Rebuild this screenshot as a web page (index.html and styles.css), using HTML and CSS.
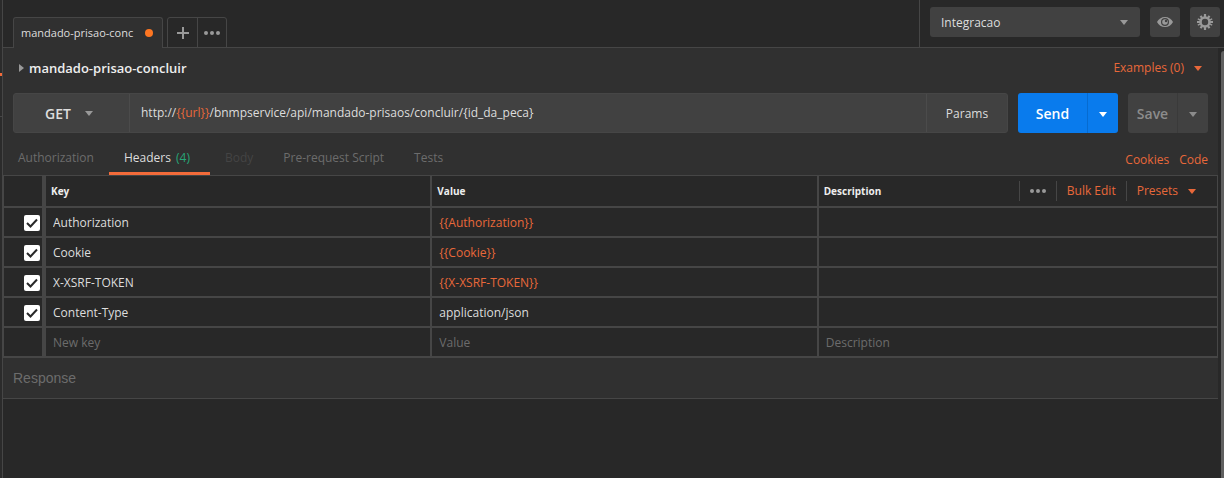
FILE: index.html
```html
<!DOCTYPE html>
<html lang="en">
<head>
  <meta charset="UTF-8">
  <meta name="viewport" content="width=device-width, initial-scale=1.0">
  <title>mandado-prisao-concluir</title>
  <link rel="stylesheet" href="styles.css">
</head>
<body>
  <!-- Collapsed sidebar -->
  <aside class="sidebar">
    <div class="sidebar-tab"></div>
    <div class="sidebar-item"></div>
  </aside>

  <div class="workspace">
    <!-- Top bar -->
    <header class="topbar">
      <nav class="tabs">
        <a href="#" class="tab">mandado-prisao-conc<span class="unsaved"></span></a>
        <div class="tab-actions">
          <button type="button" aria-label="New tab">
            <svg width="12" height="12" viewBox="0 0 12 12"><path d="M6 0v12M0 6h12" stroke="#999" stroke-width="2"/></svg>
          </button>
          <button type="button" aria-label="Tab options">
            <svg width="16" height="4" viewBox="0 0 16 4" fill="#999"><circle cx="2" cy="2" r="2"/><circle cx="8" cy="2" r="2"/><circle cx="14" cy="2" r="2"/></svg>
          </button>
        </div>
      </nav>
      <div class="environment">
        <div class="select-box env-select">
          <select aria-label="Environment">
            <option>Integracao</option>
          </select>
          <svg class="caret" width="8" height="5" viewBox="0 0 8 5"><path d="M0 0h8L4 5z"/></svg>
        </div>
        <button type="button" class="icon-button" aria-label="Quick look">
          <svg width="16" height="10" viewBox="0 0 16 10">
            <path d="M0 5C1.500 2 4.500 0 8 0s6.500 2 8 5c-1.500 3-4.500 5-8 5S1.500 8 0 5z" fill="#999"/>
            <circle cx="8" cy="5" r="4" fill="#414141"/>
            <circle cx="8" cy="5" r="2.800" fill="#999"/>
            <circle cx="9" cy="4" r="1.200" fill="#414141"/>
          </svg>
        </button>
        <button type="button" class="icon-button" aria-label="Settings">
          <svg width="16" height="16" viewBox="-8 -8 16 16">
            <g stroke="#999" stroke-width="2.200">
              <path d="M0-8V-5M0 8V5M-8 0H-5M8 0H5"/>
              <path d="M-4.500-6.200L-3-4.200M4.500-6.200L3-4.200M-4.500 6.200L-3 4.200M4.500 6.200L3 4.200"/>
              <path d="M-7.200-3.200L-5-2.200M7.200-3.200L5-2.200M-7.200 3.200L-5 2.200M7.200 3.200L5 2.200" stroke-width="1.400"/>
            </g>
            <circle r="4.500" fill="none" stroke="#999" stroke-width="2.600"/>
          </svg>
        </button>
      </div>
    </header>

    <div class="content">
      <main class="request">
        <!-- Request name -->
        <div class="request-head">
          <h1><svg width="5" height="8" viewBox="0 0 5 8"><path d="M0 0v8l5-4z" fill="#999"/></svg>mandado-prisao-concluir</h1>
          <a href="#" class="link">Examples (0)<svg class="caret" width="8" height="5" viewBox="0 0 8 5"><path d="M0 0h8L4 5z"/></svg></a>
        </div>

        <!-- Method and url -->
        <form class="url-row">
          <div class="url-bar">
            <div class="select-box method">
              <select aria-label="Method">
                <option>GET</option>
              </select>
              <svg class="caret" width="8" height="5" viewBox="0 0 8 5"><path d="M0 0h8L4 5z"/></svg>
            </div>
            <div class="url" contenteditable="true" role="textbox" aria-label="Request URL" spellcheck="false">http://<span class="variable">{{url}}</span>/bnmpservice/api/mandado-prisaos/concluir/{id_da_peca}</div>
            <button type="button" class="params">Params</button>
          </div>
          <div class="split send">
            <button type="button">Send</button>
            <button type="button" class="split-arrow" aria-label="Send options"><svg class="caret" width="8" height="5" viewBox="0 0 8 5"><path d="M0 0h8L4 5z"/></svg></button>
          </div>
          <div class="split save">
            <button type="button">Save</button>
            <button type="button" class="split-arrow" aria-label="Save options"><svg class="caret" width="8" height="5" viewBox="0 0 8 5"><path d="M0 0h8L4 5z"/></svg></button>
          </div>
        </form>

        <!-- Request sections -->
        <div class="sections">
          <nav class="section-tabs">
            <a href="#">Authorization</a>
            <a href="#" class="active">Headers <span class="count">(4)</span></a>
            <a href="#" class="disabled">Body</a>
            <a href="#">Pre-request Script</a>
            <a href="#">Tests</a>
          </nav>
          <div class="section-links">
            <a href="#" class="link">Cookies</a>
            <a href="#" class="link">Code</a>
          </div>
        </div>

        <!-- Headers -->
        <table class="headers">
          <colgroup>
            <col class="col-check">
            <col class="col-key">
            <col class="col-value">
            <col>
          </colgroup>
          <thead>
            <tr>
              <th></th>
              <th>Key</th>
              <th>Value</th>
              <th>
                <div class="last-head">
                  Description
                  <div class="table-actions">
                    <button type="button" aria-label="Columns"><svg width="16" height="4" viewBox="0 0 16 4" fill="#999"><circle cx="2" cy="2" r="2"/><circle cx="8" cy="2" r="2"/><circle cx="14" cy="2" r="2"/></svg></button>
                    <a href="#" class="link">Bulk Edit</a>
                    <a href="#" class="link">Presets<svg class="caret" width="8" height="5" viewBox="0 0 8 5"><path d="M0 0h8L4 5z"/></svg></a>
                  </div>
                </div>
              </th>
            </tr>
          </thead>
          <tbody>
            <tr>
              <td><label class="check"><input type="checkbox" aria-label="Authorization" checked><svg width="12" height="10" viewBox="0 0 12 10"><path d="M1 5l3.500 3.500L11 1.500"/></svg></label></td>
              <td><input type="text" aria-label="Key" value="Authorization"></td>
              <td><input type="text" aria-label="Value" class="variable" value="{{Authorization}}"></td>
              <td><input type="text" aria-label="Description"></td>
            </tr>
            <tr>
              <td><label class="check"><input type="checkbox" aria-label="Cookie" checked><svg width="12" height="10" viewBox="0 0 12 10"><path d="M1 5l3.500 3.500L11 1.500"/></svg></label></td>
              <td><input type="text" aria-label="Key" value="Cookie"></td>
              <td><input type="text" aria-label="Value" class="variable" value="{{Cookie}}"></td>
              <td><input type="text" aria-label="Description"></td>
            </tr>
            <tr>
              <td><label class="check"><input type="checkbox" aria-label="X-XSRF-TOKEN" checked><svg width="12" height="10" viewBox="0 0 12 10"><path d="M1 5l3.500 3.500L11 1.500"/></svg></label></td>
              <td><input type="text" aria-label="Key" value="X-XSRF-TOKEN"></td>
              <td><input type="text" aria-label="Value" class="variable" value="{{X-XSRF-TOKEN}}"></td>
              <td><input type="text" aria-label="Description"></td>
            </tr>
            <tr>
              <td><label class="check"><input type="checkbox" aria-label="Content-Type" checked><svg width="12" height="10" viewBox="0 0 12 10"><path d="M1 5l3.500 3.500L11 1.500"/></svg></label></td>
              <td><input type="text" aria-label="Key" value="Content-Type"></td>
              <td><input type="text" aria-label="Value" value="application/json"></td>
              <td><input type="text" aria-label="Description"></td>
            </tr>
            <tr>
              <td></td>
              <td><input type="text" aria-label="New key" placeholder="New key"></td>
              <td><input type="text" aria-label="Value" placeholder="Value"></td>
              <td><input type="text" aria-label="Description" placeholder="Description"></td>
            </tr>
          </tbody>
        </table>

        <!-- Response -->
        <h2 class="response">Response</h2>
      </main>
      <div class="scrollbar"><div class="thumb"></div></div>
    </div>
  </div>
</body>
</html>
```
FILE: styles.css
```css
/* Reset and Global Styles */
* {
  margin: 0;
  padding: 0;
  box-sizing: border-box;
}
body {
  display: flex;
  min-height: 100vh;
  font-family: "Open Sans", sans-serif;
  font-size: 12px;
  line-height: 20px;
  color: #ddd;
  background-color: #282828;
}
button, input, select {
  font: inherit;
  color: inherit;
  background: none;
  border: none;
  outline: none;
}
button {
  display: flex;
  align-items: center;
  justify-content: center;
  cursor: pointer;
}
a {
  color: inherit;
  text-decoration: none;
}
svg {
  display: block;
  flex: none;
}
.link, .variable {
  color: #e8683a;
}
.link {
  display: flex;
  align-items: center;
  gap: 10px;
}
.caret {
  fill: currentColor;
}

/* Sidebar */
.sidebar {
  width: 3px;
  background-color: #2b2b2b;
  border-right: 1px solid #464646;
}
.sidebar-tab {
  height: 76px;
  border-bottom: 3px solid #f36b3a;
}
.sidebar-item {
  height: 41px;
  border-bottom: 1px solid #464646;
}

.workspace {
  flex: 1;
  display: flex;
  flex-direction: column;
  min-width: 0;
}

/* Top bar */
.topbar {
  display: flex;
  justify-content: space-between;
  height: 48px;
  box-shadow: inset 0 -1px #464646;
}
.tabs {
  display: flex;
  align-items: flex-end;
  gap: 4px;
  padding-left: 10px;
}
.tab {
  display: flex;
  align-items: center;
  justify-content: space-between;
  width: 150px;
  height: 31px;
  padding: 0 9px 0 7px;
  font-size: 11px;
  background-color: #303030;
  border: 1px solid #464646;
  border-bottom: none;
  border-radius: 3px 3px 0 0;
}
.unsaved {
  width: 8px;
  height: 8px;
  border-radius: 50%;
  background-color: #fd7622;
}
.tab-actions {
  display: flex;
  height: 31px;
  border: 1px solid #464646;
  border-radius: 3px 3px 0 0;
}
.tab-actions button {
  width: 29px;
}
.tab-actions button + button {
  border-left: 1px solid #464646;
}
.environment {
  display: flex;
  gap: 10px;
  padding: 7px 4px 0 10px;
  border-left: 1px solid #464646;
}
.select-box {
  display: grid;
  align-items: center;
}
.select-box select,
.select-box .caret {
  grid-area: 1 / 1;
}
.select-box select {
  width: 100%;
  height: 100%;
  appearance: none;
}
.select-box .caret {
  justify-self: end;
  color: #999;
  pointer-events: none;
}
.env-select {
  width: 210px;
  height: 30px;
  background-color: #414141;
  border-radius: 3px;
}
.env-select select {
  padding: 2px 11px 0;
}
.env-select .caret {
  margin-right: 12px;
}
.icon-button {
  width: 30px;
  height: 30px;
  background-color: #414141;
  border-radius: 3px;
}

/* Request */
.content {
  flex: 1;
  display: flex;
}
.request {
  flex: 1;
  min-width: 0;
}
.request-head {
  display: flex;
  align-items: center;
  justify-content: space-between;
  height: 45px;
  padding: 0 16px 5px;
  background-color: #303030;
}
.request-head h1 {
  display: flex;
  align-items: center;
  gap: 5px;
  font-size: 13px;
  font-weight: 600;
  color: #eee;
}
.url-row {
  display: flex;
  gap: 10px;
  padding: 0 10px;
  background-color: #303030;
}
.url-bar {
  flex: 1;
  display: flex;
  height: 40px;
  background-color: #414141;
  border: 1px solid #464646;
  border-radius: 3px;
}
.method {
  width: 116px;
  font-size: 14px;
  font-weight: 600;
  border-right: 1px solid #4b4b4b;
}
.method select {
  padding: 2px 0 0 31px;
}
.method .caret {
  margin-right: 36px;
}
.url {
  flex: 1;
  padding: 9px 11px;
  outline: none;
}
.params {
  width: 81px;
  padding-top: 1px;
  border-left: 1px solid #4b4b4b;
}
.split {
  display: flex;
  height: 40px;
  font-size: 14px;
  font-weight: 600;
  background-color: #414141;
  border-radius: 3px;
}
.split button {
  flex: 1;
  padding-top: 2px;
}
.split .split-arrow {
  flex: none;
  width: 31px;
  border-left: 1px solid #3a3a3a;
}
.send {
  width: 100px;
  color: #fff;
  background-color: #097bed;
}
.send .split-arrow {
  border-color: #066bd0;
}
.save {
  width: 80px;
  color: #8c8c8c;
}

/* Sections */
.sections {
  display: flex;
  justify-content: space-between;
  height: 43px;
  padding-right: 10px;
  background-color: #303030;
  border-bottom: 1px solid #464646;
}
.section-tabs {
  display: flex;
  color: #6c6c6c;
}
.section-tabs a {
  padding: 15px 15px 0;
}
.section-tabs .active {
  color: #ddd;
  padding-right: 20px;
  border-bottom: 3px solid #f36b3a;
}
.section-tabs .disabled {
  color: #444;
}
.count {
  margin-left: 2px;
  color: #27a577;
}
.section-links {
  display: flex;
  gap: 10px;
  padding-top: 11px;
}

/* Headers table */
.headers {
  width: 100%;
  table-layout: fixed;
  border-spacing: 0;
}
.col-check {
  width: 43px;
}
.col-key, .col-value {
  width: 31.8%;
}
.headers th, .headers td {
  border-right: 2px solid #464646;
  border-bottom: 2px solid #464646;
}
.headers th:first-child, .headers td:first-child {
  border-left: 1px solid #464646;
  border-right-width: 4px;
}
.headers th:last-child, .headers td:last-child {
  border-right-width: 1px;
}
.headers th {
  height: 32px;
  padding: 0 5px;
  font-size: 10px;
  font-weight: 700;
  text-align: left;
  color: #eee;
}
.headers td {
  height: 30px;
}
.headers td input[type="text"] {
  display: block;
  width: 100%;
  height: 28px;
  padding: 0 7px;
}
.headers input::placeholder {
  color: #6c6c6c;
}
.last-head {
  display: flex;
  align-items: center;
  justify-content: space-between;
}
.table-actions {
  display: flex;
  align-items: center;
  font-size: 12px;
  font-weight: 400;
}
.table-actions button, .table-actions a {
  height: 20px;
  padding: 0 10px;
  border-left: 1px solid #464646;
}
.table-actions a:last-child {
  gap: 10px;
  padding-right: 16px;
}

/* Checkbox */
.check {
  display: grid;
  place-items: center;
  width: 16px;
  height: 16px;
  margin: 2px 0 0 20px;
  background-color: #fff;
  border-radius: 2px;
}
.check input, .check svg {
  grid-area: 1 / 1;
}
.check input {
  width: 16px;
  height: 16px;
  appearance: none;
}
.check svg {
  display: none;
  fill: none;
  stroke: #282828;
  stroke-width: 2;
  pointer-events: none;
}
.check input:checked + svg {
  display: block;
}

/* Response */
.response {
  height: 41px;
  padding: 10px;
  font-family: "Liberation Sans", Arial, sans-serif;
  font-size: 14px;
  font-weight: 400;
  color: #6c6c6c;
  background-color: #303030;
  border-bottom: 1px solid #464646;
}

/* Scrollbar */
.scrollbar {
  display: flex;
  width: 6px;
  padding: 3px 0 0 3px;
}
.thumb {
  flex: 1;
  background-color: #606060;
  border-radius: 3px 0 0 0;
}
```
